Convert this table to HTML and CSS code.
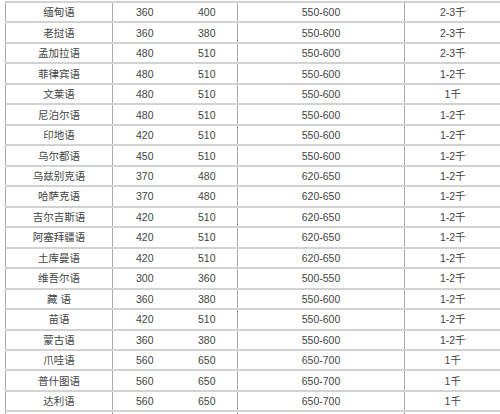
FILE: index.html
```html
<!DOCTYPE html>
<html lang="zh">
<head>
<meta charset="utf-8">
<title>语种表</title>
<link rel="stylesheet" href="styles.css">
</head>
<body>
<div class="wrap">
<table class="lang-table">
<colgroup>
<col class="c1"><col class="c2"><col class="c3"><col class="c4"><col class="c5">
</colgroup>
<tbody>
<tr><td>缅甸语</td><td class="n">360</td><td class="n nl">400</td><td>550-600</td><td class="last">2-3千</td></tr>
<tr><td>老挝语</td><td class="n">360</td><td class="n nl">380</td><td>550-600</td><td class="last">2-3千</td></tr>
<tr><td>孟加拉语</td><td class="n">480</td><td class="n nl">510</td><td>550-600</td><td class="last">2-3千</td></tr>
<tr><td>菲律宾语</td><td class="n">480</td><td class="n nl">510</td><td>550-600</td><td class="last">1-2千</td></tr>
<tr><td>文莱语</td><td class="n">480</td><td class="n nl">510</td><td>550-600</td><td class="last">1千</td></tr>
<tr><td>尼泊尔语</td><td class="n">480</td><td class="n nl">510</td><td>550-600</td><td class="last">1-2千</td></tr>
<tr><td>印地语</td><td class="n">420</td><td class="n nl">510</td><td>550-600</td><td class="last">1-2千</td></tr>
<tr><td>乌尔都语</td><td class="n">450</td><td class="n nl">510</td><td>550-600</td><td class="last">1-2千</td></tr>
<tr><td>乌兹别克语</td><td class="n">370</td><td class="n nl">480</td><td>620-650</td><td class="last">1-2千</td></tr>
<tr><td>哈萨克语</td><td class="n">370</td><td class="n nl">480</td><td>620-650</td><td class="last">1-2千</td></tr>
<tr><td>吉尔吉斯语</td><td class="n">420</td><td class="n nl">510</td><td>620-650</td><td class="last">1-2千</td></tr>
<tr><td>阿塞拜疆语</td><td class="n">420</td><td class="n nl">510</td><td>620-650</td><td class="last">1-2千</td></tr>
<tr><td>土库曼语</td><td class="n">420</td><td class="n nl">510</td><td>620-650</td><td class="last">1-2千</td></tr>
<tr><td>维吾尔语</td><td class="n">300</td><td class="n nl">360</td><td>500-550</td><td class="last">1-2千</td></tr>
<tr><td>藏 语</td><td class="n">360</td><td class="n nl">380</td><td>550-600</td><td class="last">1-2千</td></tr>
<tr><td>苗语</td><td class="n">420</td><td class="n nl">510</td><td>550-600</td><td class="last">1-2千</td></tr>
<tr><td>蒙古语</td><td class="n">360</td><td class="n nl">380</td><td>550-600</td><td class="last">1-2千</td></tr>
<tr><td>爪哇语</td><td class="n">560</td><td class="n nl">650</td><td>650-700</td><td class="last">1千</td></tr>
<tr><td>普什图语</td><td class="n">560</td><td class="n nl">650</td><td>650-700</td><td class="last">1千</td></tr>
<tr><td>达利语</td><td class="n">560</td><td class="n nl">650</td><td>650-700</td><td class="last">1千</td></tr>
<tr><td>&nbsp;</td><td class="n"></td><td class="n nl"></td><td></td><td class="last"></td></tr>
</tbody>
</table>
</div>
</body>
</html>
```
FILE: styles.css
```css
html, body {
  margin: 0;
  padding: 0;
  background: #ffffff;
}
.wrap {
  padding: 1px 0 0 5px;
  height: 413px;
  overflow: hidden;
}
.lang-table {
  border-collapse: collapse;
  table-layout: fixed;
  width: 495px;
  font-family: "Liberation Sans", "Noto Sans CJK SC", sans-serif;
  font-size: 10.5px;
  color: #444444;
}
.c1 { width: 107px; }
.c2 { width: 64px; }
.c3 { width: 61px; }
.c4 { width: 167px; }
.c5 { width: 96px; }
.lang-table td {
  height: 20.47px;
  padding: 0;
  text-align: center;
  vertical-align: middle;
  border-top: 2px solid #d2d2d2;
  border-left: 1px solid #a9a9a9;
  border-right: 1px solid #a9a9a9;
  box-sizing: border-box;
  line-height: 14px;
}
.lang-table td.n {
  border-right: none;
}
.lang-table td.nl {
  border-left: none;
}
.lang-table td.last {
  border-right: none;
}
```
